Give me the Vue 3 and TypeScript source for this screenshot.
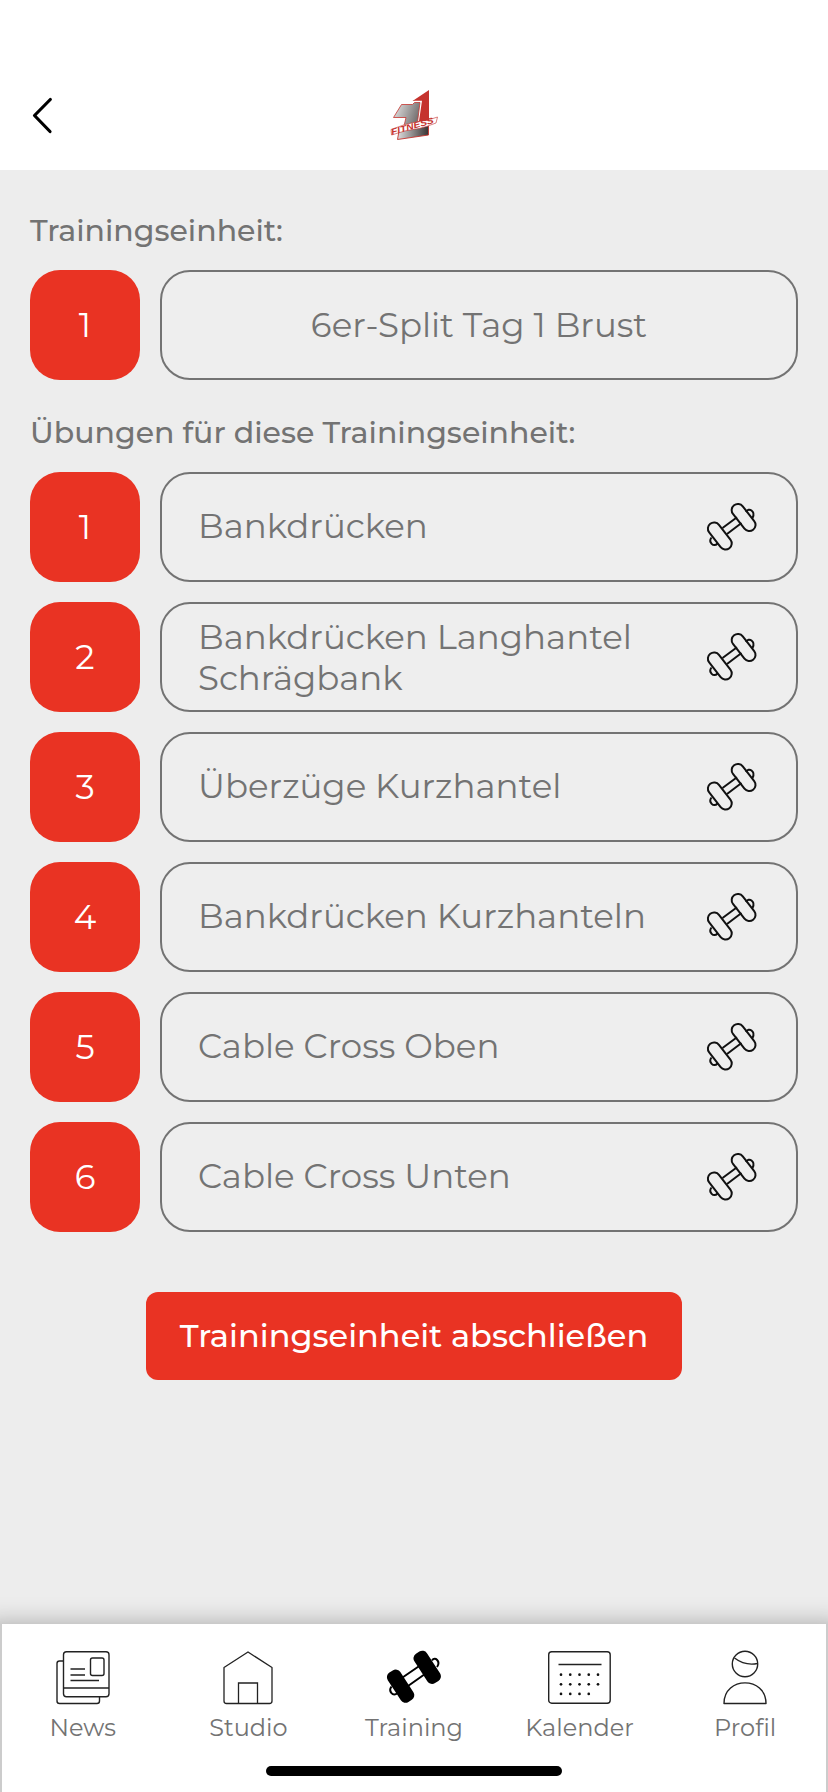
<script setup lang="ts">
interface Exercise {
  name: string
  twoLines?: boolean
}

interface Tab {
  label: string
  icon: string
}

const exercises: Exercise[] = [
  { name: 'Bankdrücken' },
  { name: 'Bankdrücken Langhantel Schrägbank', twoLines: true },
  { name: 'Überzüge Kurzhantel' },
  { name: 'Bankdrücken Kurzhanteln' },
  { name: 'Cable Cross Oben' },
  { name: 'Cable Cross Unten' },
]

const tabs: Tab[] = [
  { label: 'News', icon: 'news' },
  { label: 'Studio', icon: 'studio' },
  { label: 'Training', icon: 'training' },
  { label: 'Kalender', icon: 'calendar' },
  { label: 'Profil', icon: 'profile' },
]

const dotRows = [5, 5, 4]
</script>

<template>
  <div class="screen">
    <header class="header">
      <svg class="back" width="24" height="40" viewBox="0 0 24 40" aria-label="Zurück">
        <path d="M21.300 4.500 5.500 20.500 21 36.500" fill="none" stroke="#000" stroke-width="3.2" stroke-linecap="round" stroke-linejoin="round" />
      </svg>
      <svg class="logo" width="90" height="70" viewBox="0 0 90 70">
        <defs>
          <linearGradient id="steel" x1="0" y1="0" x2="1" y2="0.3">
            <stop offset="0" stop-color="#e8e8e8" />
            <stop offset="1" stop-color="#777373" />
          </linearGradient>
          <linearGradient id="steel-dark" x1="0" y1="0" x2="1" y2="0">
            <stop offset="0" stop-color="#ddd" />
            <stop offset="1" stop-color="#373333" />
          </linearGradient>
        </defs>
        <path d="M59 10V42H45L49 21H42.500Z" fill="#c5332e" />
        <path d="M31.500 24.500H43L45 22H50.500L47 46H34L36 37.500H23.500Z" fill="#fff" stroke="#fff" stroke-width="2.600" />
        <path d="M31.500 24.500H42.500L44.500 22.500H50L47 46H34L36 37.500H23.500Z" fill="url(#steel)" stroke="#c5332e" stroke-width="0.8" />
        <path d="M29 51 58.500 44.500V55L27.500 59.500Z" fill="url(#steel-dark)" stroke="#c5332e" stroke-width="0.9" />
        <path d="M21 49.500Q34 44 48 41.500 58 41 67.500 37L66 43Q56 47 49 48.500 35 50 21.500 55Z" fill="#fff" stroke="#c5332e" stroke-width="0.6" />
        <text class="logo-text" x="22" y="55" transform="rotate(-16 22 55)" textLength="44" lengthAdjust="spacingAndGlyphs">FITNESS</text>
      </svg>
    </header>

    <main class="content">
      <h2 class="heading heading-unit">Trainingseinheit:</h2>
      <div class="row">
        <div class="number">1</div>
        <div class="card card-unit">6er-Split Tag 1 Brust</div>
      </div>

      <h2 class="heading heading-list">Übungen für diese Trainingseinheit:</h2>
      <div class="list">
        <div v-for="(exercise, i) in exercises" :key="exercise.name" class="row">
          <div class="number">{{ i + 1 }}</div>
          <div class="card">
            <div class="name" :class="{ 'name-two-lines': exercise.twoLines }">{{ exercise.name }}</div>
            <svg class="dumbbell" width="52" height="52" viewBox="0 0 52 52" fill="none" stroke="#111" stroke-width="2">
              <path d="M17.500 27 32 16.300M22 33 36.500 22" />
              <path d="M41 11C43.500 6 51 10 47.500 17M6.500 36.500C3 41 8.500 47 12.500 42.500" />
              <rect x="-6.200" y="-15.500" width="12.400" height="31" rx="6.200" transform="translate(38.600 16.500) rotate(-38)" />
              <rect x="-6.200" y="-15.500" width="12.400" height="31" rx="6.200" transform="translate(14.800 35) rotate(-38)" />
            </svg>
          </div>
        </div>
      </div>

      <button class="finish" type="button">Trainingseinheit abschließen</button>
    </main>

    <nav class="tabbar">
      <div class="tabs">
        <div v-for="tab in tabs" :key="tab.label" class="tab">
          <svg v-if="tab.icon === 'news'" width="64" height="56" viewBox="0 0 64 56" fill="none" stroke="#222" stroke-width="1.400">
            <path d="M12 11H8.500Q6 11 6 13.500V51Q6 53.500 8.500 53.500H46Q48.500 53.500 48.500 51V47" />
            <rect x="12.500" y="1.700" width="45.500" height="45" rx="3" />
            <path d="M12.500 38H58M19.500 19H34M19.500 25H34M19.500 30.500H48" />
            <rect x="39.500" y="8" width="13.500" height="17.500" rx="2" />
          </svg>
          <svg v-else-if="tab.icon === 'studio'" width="64" height="56" viewBox="0 0 64 56" fill="none" stroke="#222" stroke-width="1.300">
            <path d="M8 17.500 32 2 56 17.500V51Q56 53.500 53.500 53.500H10.500Q8 53.500 8 51Z" stroke-linejoin="round" />
            <path d="M22.500 53.500V33H41.500V53.500" />
          </svg>
          <svg v-else-if="tab.icon === 'training'" width="64" height="56" viewBox="0 0 64 56" fill="none" stroke="#000" stroke-width="2">
            <path d="M20.500 27.500 38 15.500M26 36 43 24" />
            <path d="M50 10.500C53 6 59 11.500 55 17M9.500 36.500C6 41 11 47.500 15.500 43" />
            <rect x="-7.500" y="-17.500" width="15" height="35" rx="5.500" transform="translate(45.200 17.300) rotate(-33)" fill="#000" stroke="none" />
            <rect x="-7.500" y="-17.500" width="15" height="35" rx="5.500" transform="translate(18.600 36.200) rotate(-33)" fill="#000" stroke="none" />
          </svg>
          <svg v-else-if="tab.icon === 'calendar'" width="64" height="56" viewBox="0 0 64 56" fill="none" stroke="#222" stroke-width="1.400">
            <rect x="0.700" y="1.700" width="61.500" height="51.500" rx="3" />
            <path d="M10.500 14.500H53.500" />
            <template v-for="(count, r) in dotRows" :key="r">
              <circle v-for="c in count" :key="c" :cx="13 + (c - 1) * 9.25" :cy="24.7 + r * 9.6" r="1.350" fill="#111" stroke="none" />
            </template>
          </svg>
          <svg v-else width="64" height="56" viewBox="0 0 64 56" fill="none" stroke="#222" stroke-width="1.400">
            <circle cx="32" cy="14" r="12.700" />
            <path d="M21.500 8Q32 16 44.500 13.500" />
            <path d="M11 53.500C11 26 53 26 53 53.500Z" stroke-linejoin="round" />
          </svg>
          <span class="tab-label">{{ tab.label }}</span>
        </div>
      </div>
      <div class="home-indicator"></div>
    </nav>
  </div>
</template>

<style>
body {
  margin: 0;
  background: #ededed;
}
</style>

<style scoped>
.screen {
  box-sizing: border-box;
  display: flex;
  flex-direction: column;
  width: 828px;
  height: 1792px;
  overflow: hidden;
  background: #ededed;
  color: #737373;
  font-family: Montserrat, Inter, 'Open Sans', sans-serif;
  font-weight: 400;
}
.header {
  display: grid;
  grid-template-columns: 1fr 90px 1fr;
  align-items: center;
  box-sizing: border-box;
  height: 170px;
  flex: none;
  padding: 60px 28px 0 29px;
  background: #fff;
}
.logo-text {
  fill: #c5332e;
  font: italic bold 8.500px 'Liberation Sans', sans-serif;
}
.content {
  flex: 1;
  display: flex;
  flex-direction: column;
  padding: 0 30px;
}
.heading {
  margin: 0;
  font-size: 30px;
  font-weight: 500;
  line-height: 40px;
  white-space: nowrap;
}
.heading-unit {
  margin: 41px 0 19px;
}
.heading-list {
  margin: 33px 0 19px;
}
.list {
  display: flex;
  flex-direction: column;
  gap: 20px;
}
.row {
  display: flex;
  gap: 20px;
}
.number {
  display: flex;
  align-items: center;
  justify-content: center;
  width: 110px;
  height: 110px;
  border-radius: 30px;
  background: #e93323;
  color: #fff;
  font-size: 34px;
}
.card {
  display: flex;
  align-items: center;
  justify-content: space-between;
  box-sizing: border-box;
  flex: 1;
  height: 110px;
  padding: 0 39px 0 36px;
  border: 2px solid #737373;
  border-radius: 30px;
  background: #eee;
  font-size: 34px;
  line-height: 41px;
}
.name {
  width: 470px;
  padding-bottom: 2px;
}
.name-two-lines {
  padding: 2px 0 0;
}
.card-unit {
  justify-content: center;
  padding: 0;
}
.finish {
  align-self: center;
  width: 536px;
  height: 88px;
  margin-top: 60px;
  padding: 0 0 2px;
  border: 0;
  border-radius: 12px;
  background: #e93323;
  color: #fff;
  font-family: inherit;
  font-size: 32px;
  font-weight: 500;
}
.tabbar {
  display: flex;
  flex-direction: column;
  align-items: center;
  box-sizing: border-box;
  height: 168px;
  flex: none;
  border: solid #ccc;
  border-width: 0 2px;
  background: #fff;
  box-shadow: 0 16px 24px 16px rgba(0, 0, 0, 0.3);
}
.tabs {
  display: flex;
  width: 828px;
  padding-top: 26px;
}
.tab {
  display: flex;
  flex: 1;
  flex-direction: column;
  align-items: center;
  gap: 6px;
}
.tab-label {
  font-size: 24px;
  line-height: 32px;
}
.home-indicator {
  width: 296px;
  height: 10px;
  margin-top: 22px;
  border-radius: 5px;
  background: #000;
}
</style>
